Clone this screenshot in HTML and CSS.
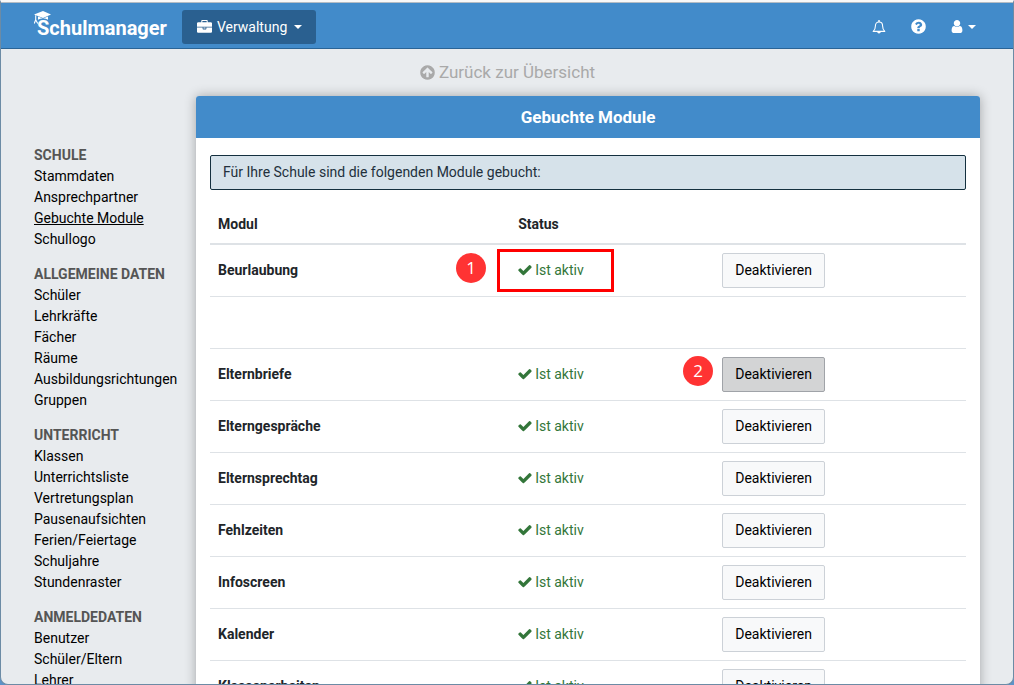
FILE: index.html
```html
<!DOCTYPE html>
<html lang="de">
<head>
<meta charset="utf-8">
<meta name="viewport" content="width=device-width, initial-scale=1">
<title>Schulmanager – Gebuchte Module</title>
<link rel="stylesheet" href="styles.css">
</head>
<body>
<svg class="sprite" aria-hidden="true">
  <symbol id="check" viewBox="90 210 1620 1620"><path d="M1671 566q0 40-28 68l-724 724-136 136q-28 28-68 28t-68-28l-136-136-362-362q-28-28-28-68t28-68l136-136q28-28 68-28t68 28l294 295 656-657q28-28 68-28t68 28l136 136q28 28 28 68z"/></symbol>
  <symbol id="up" viewBox="0 0 1792 1792"><path d="M1412 895q0-27-18-45l-362-362-91-91q-18-18-45-18t-45 18l-91 91-362 362q-18 18-18 45t18 45l91 91q18 18 45 18t45-18l189-189v502q0 26 19 45t45 19h128q26 0 45-19t19-45v-502l189 189q19 19 45 19t45-19l91-91q18-18 18-45zm252 1q0 209-103 385.5t-279.5 279.5-385.5 103-385.5-103-279.5-279.5-103-385.5 103-385.5 279.5-279.5 385.5-103 385.5 103 279.5 279.5 103 385.5z"/></symbol>
  <symbol id="help" viewBox="0 0 1792 1792"><path d="M1024 1376v-192q0-14-9-23t-23-9h-192q-14 0-23 9t-9 23v192q0 14 9 23t23 9h192q14 0 23-9t9-23zm256-672q0-88-55.5-163t-138.5-116-170-41q-243 0-371 213-15 24 8 42l132 100q7 6 19 6 16 0 25-12 53-68 86-92 34-24 86-24 48 0 85.5 26t37.5 59q0 38-20 61t-68 45q-63 28-115.5 86.5t-52.5 125.5v36q0 14 9 23t23 9h192q14 0 23-9t9-23q0-19 21.5-49.5t54.5-49.5q32-18 49-28.5t46-35 44.5-48 28-60.5 12.5-81zm384 192q0 209-103 385.5t-279.5 279.5-385.5 103-385.5-103-279.5-279.5-103-385.5 103-385.5 279.5-279.5 385.5-103 385.5 103 279.5 279.5 103 385.5z"/></symbol>
  <symbol id="user" viewBox="192 128 1408 1664"><path d="M1536 1399q0 109-62.5 187t-150.5 78h-854q-88 0-150.5-78t-62.5-187q0-85 8.5-160.5t31.5-152 58.5-131 94-89 134.5-34.5q131 128 313 128t313-128q76 0 134.5 34.5t94 89 58.5 131 31.5 152 8.5 160.5zm-256-887q0 159-112.5 271.5t-271.5 112.5-271.5-112.5-112.5-271.5 112.5-271.5 271.5-112.5 271.5 112.5 112.5 271.5z"/></symbol>
  <symbol id="case" viewBox="0 0 1792 1792"><path d="M640 256h512v-128h-512v128zm1152 640v480q0 66-47 113t-113 47h-1472q-66 0-113-47t-47-113v-480h672v160q0 26 19 45t45 19h320q26 0 45-19t19-45v-160h672zm-768 0v128h-256v-128h256zm768-480v384h-1792v-384q0-66 47-113t113-47h352v-160q0-40 28-68t68-28h576q40 0 68 28t28 68v160h352q66 0 113 47t47 113z"/></symbol>
  <symbol id="bell" viewBox="0 0 14 14"><path d="M1.2 11.4C2.800 10 3.400 8.300 3.400 5.900 3.400 3.600 4.800 2 7 2s3.600 1.600 3.600 3.900c0 2.400.6 4.100 2.200 5.500z" fill="none" stroke="currentColor" stroke-width="1.100" stroke-linejoin="round"/><path d="M6.300 0h1.400v2H6.300zM5.200 11.800h3.600a1.800 1.800 0 0 1-3.600 0z"/></symbol>
  <symbol id="cap" viewBox="0 0 17 14"><path d="M0 3.400 9 0l8 3.500-8 3.400z"/><path d="M4 5.500v3.300c2.500-1.600 7.500-1.600 10 0V5.500L9 7.600z"/><path d="M1.700 4.200v4.600L.2 12.600M1.700 8.800l2 3.600" fill="none" stroke="currentColor" stroke-width="1.100"/></symbol>
</svg>
<div class="window">
  <header class="navbar">
    <a class="brand" href="#"><svg class="brand-cap"><use href="#cap"/></svg>Schulmanager</a>
    <button class="module-menu" type="button"><svg class="icon medium"><use href="#case"/></svg>Verwaltung<span class="caret"></span></button>
    <nav class="tools" aria-label="Konto">
      <button type="button" aria-label="Benachrichtigungen"><svg class="icon"><use href="#bell"/></svg></button>
      <button type="button" aria-label="Hilfe"><svg class="icon large"><use href="#help"/></svg></button>
      <button type="button" aria-label="Benutzerkonto"><svg class="icon"><use href="#user"/></svg><span class="caret"></span></button>
    </nav>
  </header>
  <div class="back"><a href="#"><svg class="icon large"><use href="#up"/></svg>Zurück zur Übersicht</a></div>
  <div class="content">
    <nav class="sidebar" aria-label="Verwaltung">
      <section><h2>SCHULE</h2>
        <a href="#">Stammdaten</a><a href="#">Ansprechpartner</a><a class="current" href="#" aria-current="page">Gebuchte Module</a><a href="#">Schullogo</a></section>
      <section><h2>ALLGEMEINE DATEN</h2>
        <a href="#">Schüler</a><a href="#">Lehrkräfte</a><a href="#">Fächer</a><a href="#">Räume</a><a href="#">Ausbildungsrichtungen</a><a href="#">Gruppen</a></section>
      <section><h2>UNTERRICHT</h2>
        <a href="#">Klassen</a><a href="#">Unterrichtsliste</a><a href="#">Vertretungsplan</a><a href="#">Pausenaufsichten</a><a href="#">Ferien/Feiertage</a><a href="#">Schuljahre</a><a href="#">Stundenraster</a></section>
      <section><h2>ANMELDEDATEN</h2>
        <a href="#">Benutzer</a><a href="#">Schüler/Eltern</a><a href="#">Lehrer</a></section>
    </nav>
    <main class="card">
      <h1>Gebuchte Module</h1>
      <div class="card-body">
        <p class="alert">Für Ihre Schule sind die folgenden Module gebucht:</p>
        <table>
          <colgroup><col class="col-name"><col class="col-status"><col></colgroup>
          <thead><tr><th scope="col">Modul</th><th scope="col">Status</th><td></td></tr></thead>
          <tbody>
            <tr><th scope="row">Beurlaubung</th><td><span class="step step-one">1</span><span class="frame"></span><span class="active"><svg class="icon"><use href="#check"/></svg>Ist aktiv</span></td><td><button class="btn" type="button">Deaktivieren</button></td></tr>
            <tr><th></th><td></td><td></td></tr>
            <tr><th scope="row">Elternbriefe</th><td><span class="active"><svg class="icon"><use href="#check"/></svg>Ist aktiv</span></td><td><span class="step step-two">2</span><button class="btn pressed" type="button">Deaktivieren</button></td></tr>
            <tr><th scope="row">Elterngespräche</th><td><span class="active"><svg class="icon"><use href="#check"/></svg>Ist aktiv</span></td><td><button class="btn" type="button">Deaktivieren</button></td></tr>
            <tr><th scope="row">Elternsprechtag</th><td><span class="active"><svg class="icon"><use href="#check"/></svg>Ist aktiv</span></td><td><button class="btn" type="button">Deaktivieren</button></td></tr>
            <tr><th scope="row">Fehlzeiten</th><td><span class="active"><svg class="icon"><use href="#check"/></svg>Ist aktiv</span></td><td><button class="btn" type="button">Deaktivieren</button></td></tr>
            <tr><th scope="row">Infoscreen</th><td><span class="active"><svg class="icon"><use href="#check"/></svg>Ist aktiv</span></td><td><button class="btn" type="button">Deaktivieren</button></td></tr>
            <tr><th scope="row">Kalender</th><td><span class="active"><svg class="icon"><use href="#check"/></svg>Ist aktiv</span></td><td><button class="btn" type="button">Deaktivieren</button></td></tr>
            <tr><th scope="row">Klassenarbeiten</th><td><span class="active"><svg class="icon"><use href="#check"/></svg>Ist aktiv</span></td><td><button class="btn" type="button">Deaktivieren</button></td></tr>
          </tbody>
        </table>
      </div>
    </main>
  </div>
</div>
</body>
</html>
```
FILE: styles.css
```css
* { box-sizing: border-box; }

body {
  margin: 0;
  background: #5c93c8;
  color: #212529;
  font: 14px/21px Roboto, "Liberation Sans", sans-serif;
}

a { color: inherit; text-decoration: none; }
button { font: inherit; color: inherit; cursor: pointer; }
.sprite { display: none; }
.icon { width: 14px; height: 14px; fill: currentColor; flex: none; }
.icon.medium { width: 15px; height: 15px; }
.icon.large { width: 17px; height: 17px; }

.window {
  height: 100vh;
  overflow: hidden;
  background: #e8ebee;
  border: 1px solid #6c8ba5;
  border-top: 2px solid #f8f8f8;
  border-radius: 0 0 8px 8px;
}

.navbar {
  display: flex;
  align-items: center;
  height: 47px;
  padding: 2px 33px 0;
  color: #fff;
  background: #428bca;
  border-top: 1px solid #b4bcc4;
  border-bottom: 1px solid #2a6496;
}
.brand {
  position: relative;
  padding: 4px 0 0 3px;
  font-size: 20px;
  font-weight: 700;
}
.brand-cap {
  position: absolute;
  left: 0;
  top: -3px;
  width: 17px;
  height: 14px;
  fill: currentColor;
}
.module-menu {
  display: flex;
  align-items: center;
  height: 34px;
  gap: 5px;
  margin-left: 15px;
  padding: 1px 14px 0 15px;
  background: #2a6090;
  border: 0;
  border-radius: 3px;
}
.module-menu .caret { margin-left: 2px; }
.caret {
  border: 4px solid transparent;
  border-top-color: currentColor;
  border-bottom: 0;
}
.tools { display: flex; gap: 24px; margin-left: auto; padding-right: 4px; }
.tools button {
  display: flex;
  align-items: center;
  gap: 5px;
  padding: 0;
  background: none;
  border: 0;
}
.tools button:last-child { gap: 4px; margin-left: -1px; }

.back { display: flex; justify-content: center; padding: 13px 0; color: #a9a9a9; font-size: 17px; }
.back a { display: flex; align-items: center; gap: 3px; }

.content { display: flex; padding: 0 33px; }
.sidebar { width: 162px; flex: none; padding-top: 49px; color: #000; }
.sidebar section { margin-bottom: 14px; }
.sidebar h2 { margin: 0; color: #555; font-size: 14px; font-weight: 700; }
.sidebar a { display: block; }
.sidebar .current { text-decoration: underline; }

.card {
  flex: 1;
  background: #fff;
  border-radius: 3px;
  box-shadow: 0 0 12px rgba(0, 0, 0, .3);
}
.card h1 {
  margin: 0;
  padding: 10px;
  color: #fff;
  background: #428bca;
  border-radius: 3px 3px 0 0;
  font-size: 17px;
  line-height: 22px;
  text-align: center;
}
.card-body { padding: 17px 14px; }
.alert {
  margin: 0 0 16px;
  padding: 6px 12px;
  color: #22303c;
  background: #d6e2ea;
  border: 1px solid #14303f;
  border-radius: 2px;
}

table { width: 100%; table-layout: fixed; border-collapse: separate; border-spacing: 0; }
.col-name { width: 39.7%; }
.col-status { width: 27%; }
th, td {
  position: relative;
  height: 52px;
  padding: 8px;
  border-bottom: 1px solid #dee2e6;
  text-align: left;
}
thead th, thead td { height: 39px; border-bottom-width: 2px; }
.active { display: flex; align-items: center; gap: 3px; color: #33763a; }
.btn {
  display: block;
  padding: 6px 12px;
  color: #000;
  background: #f8f9fa;
  border: 1px solid #ccd1d7;
  border-radius: 2px;
}
.btn.pressed { background: #d3d4d5; border-color: #a0a3a8; }

.frame {
  position: absolute;
  left: -13px;
  top: 4px;
  width: 117px;
  height: 43px;
  border: 3px solid #f00;
}
.step {
  position: absolute;
  width: 30px;
  height: 30px;
  border-radius: 50%;
  color: #fff;
  background: #ff3333;
  font: 17px/30px "Open Sans", sans-serif;
  text-align: center;
}
.step-one { left: -54px; top: 8px; }
.step-two { left: -31px; top: 7px; }
```
